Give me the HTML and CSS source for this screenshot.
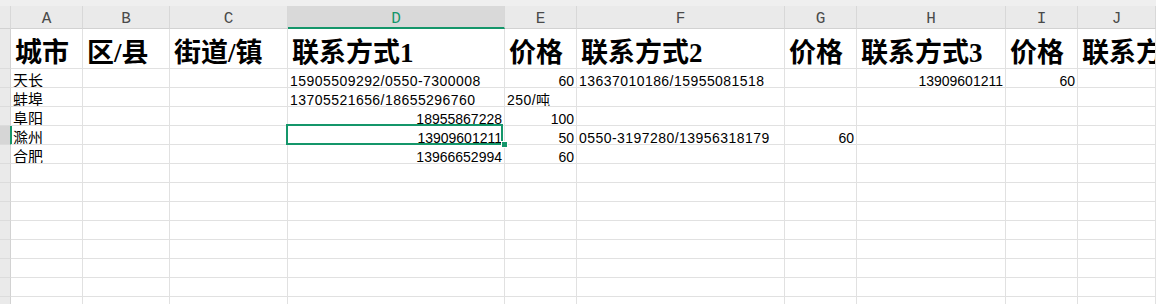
FILE: index.html
```html
<!DOCTYPE html>
<html lang="zh-CN">
<head>
  <meta charset="UTF-8">
  <meta name="viewport" content="width=device-width, initial-scale=1.0">
  <title>联系方式</title>
  <link rel="stylesheet" href="styles.css">
</head>
<body>
  <div class="sheet">
    <!-- Column letters -->
    <div class="ch corner"></div><div class="ch">A</div><div class="ch">B</div><div class="ch">C</div><div class="ch on">D</div><div class="ch">E</div><div class="ch">F</div><div class="ch">G</div><div class="ch">H</div><div class="ch">I</div><div class="ch">J</div>

    <!-- Row 1: titles -->
    <div class="rh"></div><div class="h">城市</div><div class="h">区/县</div><div class="h">街道/镇</div><div class="h">联系方式1</div><div class="h">价格</div><div class="h">联系方式2</div><div class="h">价格</div><div class="h">联系方式3</div><div class="h">价格</div><div class="h">联系方式4</div>

    <!-- Data -->
    <div class="rh"></div><div class="city">天长</div><div></div><div></div><div class="t">15905509292/0550-7300008</div><div class="r">60</div><div class="t">13637010186/15955081518</div><div></div><div class="r">13909601211</div><div class="r">60</div><div></div>
    <div class="rh"></div><div class="city">蚌埠</div><div></div><div></div><div class="t">13705521656/18655296760</div><div class="t">250/吨</div><div></div><div></div><div></div><div></div><div></div>
    <div class="rh"></div><div class="city">阜阳</div><div></div><div></div><div class="r">18955867228</div><div class="r">100</div><div></div><div></div><div></div><div></div><div></div>
    <div class="rh sel"></div><div class="city mark">滁州</div><div></div><div></div><div class="r active">13909601211</div><div class="r">50</div><div class="t">0550-3197280/13956318179</div><div class="r">60</div><div></div><div></div><div></div>
    <div class="rh"></div><div class="city">合肥</div><div></div><div></div><div class="r">13966652994</div><div class="r">60</div><div></div><div></div><div></div><div></div><div></div>

    <!-- Empty rows -->
    <div class="rh"></div><div></div><div></div><div></div><div></div><div></div><div></div><div></div><div></div><div></div><div></div>
    <div class="rh"></div><div></div><div></div><div></div><div></div><div></div><div></div><div></div><div></div><div></div><div></div>
    <div class="rh"></div><div></div><div></div><div></div><div></div><div></div><div></div><div></div><div></div><div></div><div></div>
    <div class="rh"></div><div></div><div></div><div></div><div></div><div></div><div></div><div></div><div></div><div></div><div></div>
    <div class="rh"></div><div></div><div></div><div></div><div></div><div></div><div></div><div></div><div></div><div></div><div></div>
    <div class="rh"></div><div></div><div></div><div></div><div></div><div></div><div></div><div></div><div></div><div></div><div></div>
    <div class="rh"></div><div></div><div></div><div></div><div></div><div></div><div></div><div></div><div></div><div></div><div></div>
    <div class="rh"></div><div></div><div></div><div></div><div></div><div></div><div></div><div></div><div></div><div></div><div></div>
  </div>
</body>
</html>
```

FILE: styles.css
```css
/* Global */
* { box-sizing: border-box; }
body {
  margin: 0;
  background: #fff;
  overflow: hidden;
}

/* Sheet grid */
.sheet {
  display: grid;
  grid-template-columns: 11px 72px 87px 118px 217px 72px 208px 72px 149px 72px 1fr;
  grid-template-rows: 29px 40px;
  grid-auto-rows: 19px;
  height: 304px;
  overflow: hidden;
  background: #efefef;
}
.sheet > div {
  background: #fff;
  border-right: 1px solid #e1e1e1;
  border-bottom: 1px solid #e1e1e1;
  overflow: hidden;
  white-space: nowrap;
  padding: 3px 2px 0;
  font: 14px/18px "Liberation Sans", "Noto Sans CJK SC", sans-serif;
  color: #000;
}

/* Column letters */
.sheet > .ch {
  margin-top: 6px;
  padding: 2px 0 0;
  background: #eaeaea;
  border-right-color: #d8d8d8;
  border-bottom-color: #d2d2d2;
  text-align: center;
  font: 16px/22px "Liberation Mono", monospace;
  color: #4a4a4a;
}
.sheet > .ch.on {
  background: #d9d9d9;
  color: #14966a;
  border-bottom: 2px solid #14966a;
}

/* Row gutter */
.sheet > .rh {
  background: #eaeaea;
  border-right-color: #d2d2d2;
  border-bottom-color: #dcdcdc;
}
.sheet > .rh.sel {
  background: #d6d6d6;
  border-right-color: #14966a;
}
.sheet > .mark { box-shadow: inset 1px 0 0 #14966a; }

/* Title row */
.sheet > .h {
  padding: 7px 2px 0 4px;
  font: bold 27px/35px "Liberation Serif", "Noto Sans CJK SC", serif;
}

/* Cells */
.sheet > .city { font-size: 15px; }
.sheet > .t { letter-spacing: 0.45px; }
.sheet > .r { text-align: right; }

/* Selected cell */
.sheet > .active {
  position: relative;
  overflow: visible;
}
.active::before {
  content: "";
  position: absolute;
  left: -2px;
  top: -2px;
  right: 1px;
  bottom: -1px;
  border: 2px solid #14966a;
}
.active::after {
  content: "";
  position: absolute;
  left: 214px;
  top: 16px;
  width: 5px;
  height: 5px;
  background: #14966a;
  outline: 1px solid #fff;
}
```
